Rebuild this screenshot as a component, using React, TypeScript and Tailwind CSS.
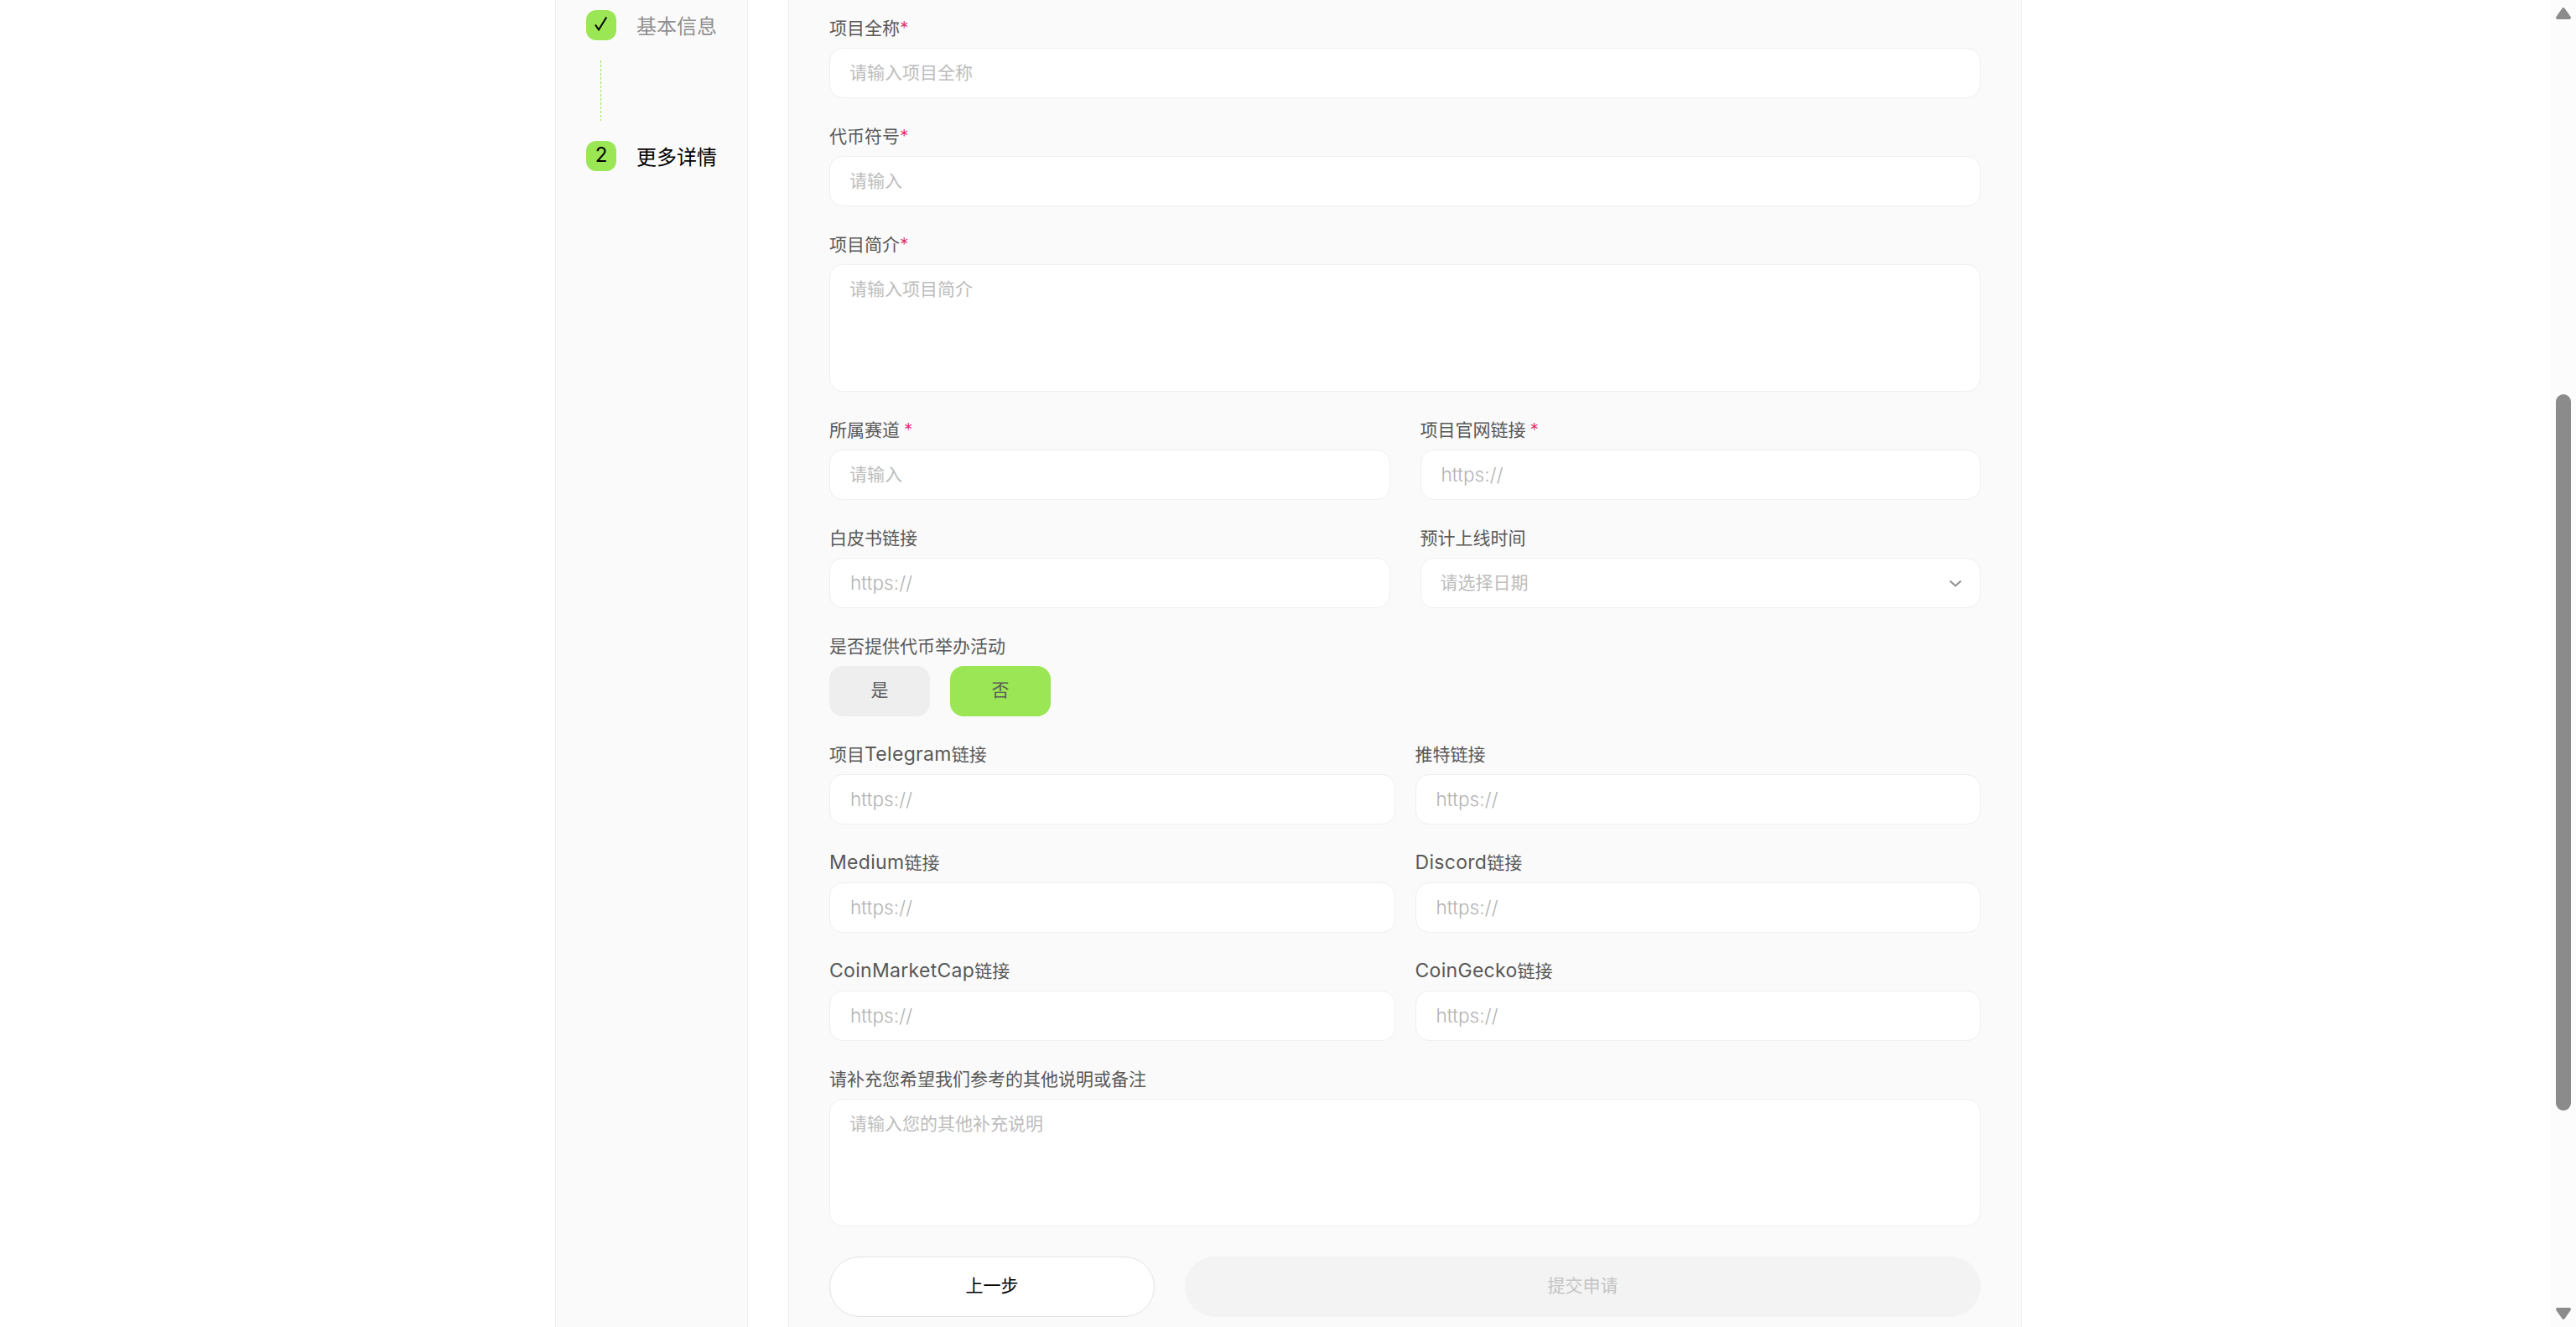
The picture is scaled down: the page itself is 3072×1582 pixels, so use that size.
import React from "react";

const FONT =
  "font-['Inter','Noto_Sans_CJK_SC',sans-serif]";

function Label({ text, star, spaced }: { text: string; star?: boolean; spaced?: boolean }) {
  const parts = text.split(/([A-Za-z]+)/).filter(Boolean);
  return (
    <div className="flex h-[33px] items-baseline whitespace-nowrap text-[21px] leading-[19px] text-[#585858]">
      {parts.map((p, i) => (
        <span key={i} className={/^[A-Za-z]/.test(p) ? "text-[23px] leading-[17px] tracking-[0.3px]" : ""}>
          {p}
        </span>
      ))}
      {star && <span className={spaced ? "ml-[5px] font-light text-[#e0245e]" : "font-light text-[#e0245e]"}>*</span>}
    </div>
  );
}

type FieldProps = {
  label: string;
  placeholder: string;
  star?: boolean;
  spaced?: boolean;
  tall?: boolean;
  select?: boolean;
};

function Field({ label, placeholder, star, spaced, tall, select }: FieldProps) {
  return (
    <div className="min-w-0 flex-1">
      <Label text={label} star={star} spaced={spaced} />
      <div
        className={
          tall
            ? "flex h-[152px] items-start rounded-2xl border border-[#efefef] bg-white pl-[23px] pr-6 pt-[17px]"
            : "flex h-[60px] items-center justify-between rounded-2xl border border-[#efefef] bg-white pb-px pl-[23px] pr-6"
        }
      >
        <span
          className={
            placeholder === "https://"
              ? "pl-px text-[22.5px] font-light leading-[24px] tracking-[0.1px] text-[#b2b2b2]"
              : "text-[21px] leading-[24px] text-[#bdbdbd]"
          }
        >
          {placeholder}
        </span>
        {select && (
          <svg className="mr-[-3px] h-4 w-4" viewBox="0 0 16 16" fill="none" stroke="#8f8f8f" strokeWidth="2">
            <path d="M1.5 5.5 8 11.5l6.5-6" />
          </svg>
        )}
      </div>
    </div>
  );
}

const LINKS: [string, string][] = [
  ["项目Telegram链接", "推特链接"],
  ["Medium链接", "Discord链接"],
  ["CoinMarketCap链接", "CoinGecko链接"],
];

function Steps() {
  return (
    <aside className="w-[230px] border-x border-[#efefef] bg-[#fafafa] pl-9 pt-3">
      <div className="flex h-9 items-center gap-6">
        <div className="h-9 w-9 rounded-xl bg-[#9be654]">
          <svg className="h-9 w-9" viewBox="0 0 36 36" fill="none" stroke="#000" strokeWidth="2">
            <path d="M11 17.5 15 23.5 24.3 8.5" />
          </svg>
        </div>
        <span className="pt-1 text-[24px] leading-8 text-[#8f8f8f]">基本信息</span>
      </div>
      <div className="my-6 ml-[17px] h-[72px] w-px bg-[repeating-linear-gradient(to_bottom,#9be654_0_3px,transparent_3px_5px)]" />
      <div className="flex h-9 items-center gap-6">
        <div className="flex h-9 w-9 items-center justify-center rounded-xl bg-[#9be654] pb-0.5 text-[24px] leading-8 text-black">
          2
        </div>
        <span className="pt-1 text-[24px] leading-8 text-black">更多详情</span>
      </div>
    </aside>
  );
}

function Scrollbar() {
  return (
    <div className="flex w-[30px] flex-col items-center bg-[#fcfcfc] pt-[9px]">
      <svg className="h-[14px] w-[18px]" viewBox="0 0 18 14" fill="#8b8b8b">
        <path d="M7.4.9a2 2 0 0 1 3.2 0l7 10a2 2 0 0 1-1.6 3.1H2a2 2 0 0 1-1.6-3.1z" />
      </svg>
      <div className="mt-[447px] h-[854px] w-[18px] rounded-full bg-[#8b8b8b]" />
      <svg className="mt-[235px] h-[14px] w-[18px]" viewBox="0 0 18 14" fill="#8b8b8b">
        <path d="M7.4 13.1a2 2 0 0 0 3.2 0l7-10A2 2 0 0 0 16 0H2A2 2 0 0 0 .4 3.1z" />
      </svg>
    </div>
  );
}

export default function App() {
  return (
    <div className={`flex h-[1582px] w-[3072px] justify-between overflow-hidden bg-white ${FONT}`}>
      <div className="ml-[662px] flex gap-12">
        <Steps />
        <main className="flex w-[1471px] flex-col gap-9 border-x border-[#efefef] bg-[#fafafa] px-12 pt-6">
          <div className="flex"><Field label="项目全称" star placeholder="请输入项目全称" /></div>
          <div className="flex"><Field label="代币符号" star placeholder="请输入" /></div>
          <div className="flex"><Field label="项目简介" star placeholder="请输入项目简介" tall /></div>
          <div className="flex gap-9">
            <Field label="所属赛道" star spaced placeholder="请输入" />
            <Field label="项目官网链接" star spaced placeholder="https://" />
          </div>
          <div className="flex gap-9">
            <Field label="白皮书链接" placeholder="https://" />
            <Field label="预计上线时间" placeholder="请选择日期" select />
          </div>
          <div>
            <Label text="是否提供代币举办活动" />
            <div className="flex gap-6 text-[21px] leading-6 text-[#5c5c5c]">
              <button className="h-[60px] w-[120px] rounded-2xl bg-[#eeeeee] pb-0.5">是</button>
              <button className="h-[60px] w-[120px] rounded-2xl bg-[#9be654] pb-0.5">否</button>
            </div>
          </div>
          {LINKS.map(([a, b]) => (
            <div key={a} className="flex gap-6">
              <Field label={a} placeholder="https://" />
              <Field label={b} placeholder="https://" />
            </div>
          ))}
          <div className="flex">
            <Field label="请补充您希望我们参考的其他说明或备注" placeholder="请输入您的其他补充说明" tall />
          </div>
          <div className="flex gap-9 text-[21px]">
            <button className="h-[72px] w-[388px] rounded-full border border-[#e3e3e3] bg-white pb-0.5 text-black">
              上一步
            </button>
            <button className="h-[72px] flex-1 rounded-full bg-[#f3f3f3] pb-0.5 text-[#c4c4c4]">提交申请</button>
          </div>
        </main>
      </div>
      <Scrollbar />
    </div>
  );
}
